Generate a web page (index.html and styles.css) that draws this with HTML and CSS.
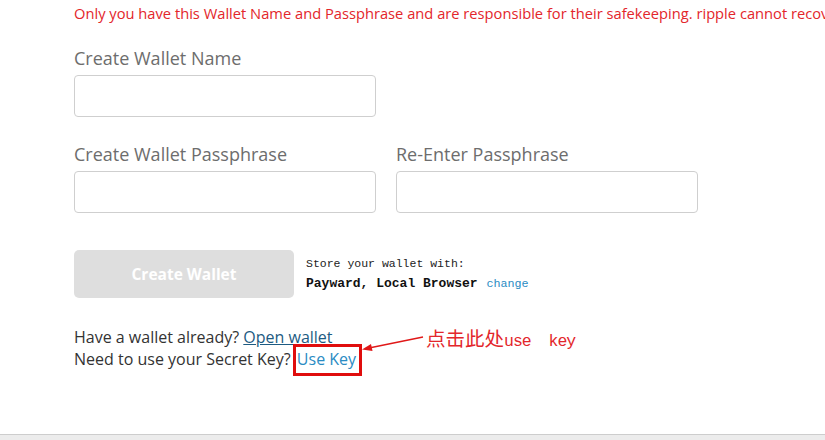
FILE: index.html
```html
<!DOCTYPE html>
<html>
<head>
<meta charset="utf-8">
<link rel="stylesheet" href="styles.css">
</head>
<body>
<div class="page">
  <p class="warning">Only you have this Wallet Name and Passphrase and are responsible for their safekeeping. ripple cannot recover them if you lose them.</p>
  <div class="row first">
    <div class="field">
      <label class="label">Create Wallet Name</label>
      <div class="input"></div>
    </div>
  </div>
  <div class="row">
    <div class="field">
      <label class="label">Create Wallet Passphrase</label>
      <div class="input"></div>
    </div>
    <div class="field">
      <label class="label">Re-Enter Passphrase</label>
      <div class="input"></div>
    </div>
  </div>
  <div class="actions">
    <button class="btn">Create Wallet</button>
    <div class="store">
      <div>Store your wallet with:</div>
      <div><b>Payward, Local Browser</b> <a class="change">change</a></div>
    </div>
  </div>
  <div class="links">
    <div>Have a wallet already? <a class="open">Open wallet</a></div>
    <div>Need to use your Secret Key? <a class="usekey">Use Key</a></div>
    <div class="note">
      <svg class="arrow" width="64" height="20" viewBox="0 0 64 20">
        <line x1="62" y1="2" x2="8" y2="13" stroke="#e01818" stroke-width="1.3"/>
        <polygon points="1,14.5 10,9 11.5,16" fill="#e01818"/>
      </svg>
      <span class="note-text">点击此处<span class="mono">use&nbsp; key</span></span>
    </div>
  </div>
</div>
<div class="footer"></div>
</body>
</html>
```
FILE: styles.css
```css
html, body {
  margin: 0;
  padding: 0;
  background: #fff;
  overflow: hidden;
}
body {
  width: 825px;
  height: 440px;
  position: relative;
  font-family: "Open Sans", sans-serif;
}
.page {
  padding-left: 74px;
  display: flex;
  flex-direction: column;
}
.warning {
  margin: 3px 0 0;
  font-size: 14.7px;
  line-height: 20px;
  color: #e3262b;
  white-space: nowrap;
}
.row {
  display: flex;
  gap: 20px;
  margin-top: 25px;
}
.row.first {
  margin-top: 23px;
}
.field {
  display: flex;
  flex-direction: column;
}
.label {
  font-size: 18px;
  line-height: 24px;
  color: #6d6d6d;
  margin-bottom: 5px;
}
.input {
  width: 300px;
  height: 40px;
  border: 1px solid #cfcfcf;
  border-radius: 4px;
  background: #fff;
}
.actions {
  display: flex;
  align-items: flex-start;
  margin-top: 37px;
  gap: 12px;
}
.btn {
  width: 220px;
  height: 48px;
  border: none;
  border-radius: 5px;
  background: #dedede;
  color: #fff;
  font-family: "Open Sans", sans-serif;
  font-weight: 700;
  font-size: 15.5px;
  padding: 0;
}
.store {
  font-family: "Liberation Mono", monospace;
  font-size: 11.5px;
  line-height: 20px;
  color: #222;
  margin-top: 4px;
}
.store b {
  font-weight: 700;
  font-size: 13px;
  color: #111;
}
.change {
  color: #2a8bc3;
  font-size: 11.7px;
  margin-left: 2px;
}
.links {
  margin-top: 28px;
  font-size: 16px;
  line-height: 22px;
  color: #333;
  position: relative;
}
.open {
  color: #1d5b82;
  text-decoration: underline;
}
.usekey {
  color: #2a8bc3;
  outline: 3px solid #e00d0d;
  padding: 1px 3px 3px 1px;
  margin-left: 1px;
}
.note {
  position: absolute;
  left: 287px;
  top: 0;
  display: flex;
  align-items: flex-start;
}
.arrow {
  margin-top: 9px;
}
.note-text {
  font-family: "Noto Sans CJK SC", sans-serif;
  color: #e3262b;
  font-size: 19.5px;
  line-height: 24px;
  margin-left: 1px;
}
.mono {
  font-family: "Liberation Mono", monospace;
  font-size: 16.5px;
  letter-spacing: -1px;
}
.footer {
  position: absolute;
  left: 0;
  right: 0;
  top: 434px;
  height: 6px;
  border-top: 1px solid #cdcdcd;
  background: #ececec;
}
```
